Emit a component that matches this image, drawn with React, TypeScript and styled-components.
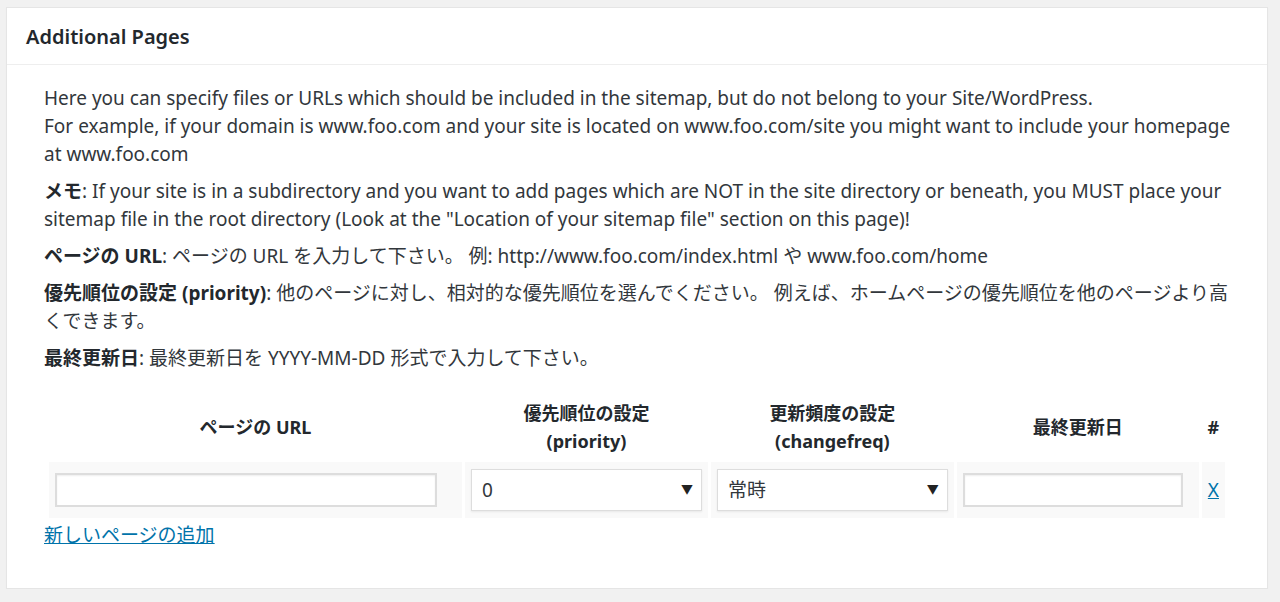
import React from "react";
import styled, { createGlobalStyle } from "styled-components";

const Global = createGlobalStyle`
  body { margin: 0; background: #f1f1f1; font-family: "Noto Sans", "Noto Sans CJK JP", sans-serif; color: #23282d; }
`;
const Page = styled.div`padding: 7px 12px 0 6px;`;
const Panel = styled.div`
  background: #fff; border: 1px solid #e5e5e5; box-shadow: 0 1px 1px rgba(0,0,0,.04);
  height: 582px; box-sizing: border-box;
`;
const Header = styled.h2`
  margin: 0; padding: 0 19px; height: 56px; display: flex; align-items: center;
  font-size: 20px; font-weight: 600; border-bottom: 1px solid #eee; color: #23282d;
`;
const Body = styled.div`padding: 19px 30px 0 37px; font-size: 19px; line-height: 28px; color: #32373c;`;
const P = styled.p`margin: 0 0 9px;`;
const B = styled.b`font-weight: 700; color: #23282d;`;
const Table = styled.table`border-spacing: 3px; margin-left: 2px; margin-top: 24px; width: 1182px;`;
const Th = styled.th<{ w: number }>`
  width: ${p => p.w}px; font-weight: 700; font-size: 18px; line-height: 28px; text-align: center;
  padding: 0 0 4px; color: #23282d;
`;
const Td = styled.td`background: #f9f9f9; height: 56px; padding: 0 6px; vertical-align: middle;`;
const Input = styled.input`
  width: 100%; box-sizing: border-box; height: 34px; border: 2px solid #ddd; background: #fff;
  box-shadow: inset 0 1px 2px rgba(0,0,0,.07);
`;
const Select = styled.div`
  height: 42px; box-sizing: border-box; border: 1px solid #ddd; background: #fff; display: flex;
  align-items: center; justify-content: space-between; padding: 0 8px 0 10px; font-size: 19px; color: #32373c;
  box-shadow: 0 1px 2px rgba(0,0,0,.07);
`;
const Arrow = styled.span`font-size: 12px; color: #222;`;
const Link = styled.a`color: #0073aa; text-decoration: underline; font-size: 19px;`;

export default function App() {
  return (
    <Page>
      <Global />
      <Panel>
        <Header>Additional Pages</Header>
        <Body>
          <P>Here you can specify files or URLs which should be included in the sitemap, but do not belong to your Site/WordPress.<br />
            For example, if your domain is www.foo.com and your site is located on www.foo.com/site you might want to include your homepage at www.foo.com</P>
          <P><B>メモ</B>: If your site is in a subdirectory and you want to add pages which are NOT in the site directory or beneath, you MUST place your sitemap file in the root directory (Look at the "Location of your sitemap file" section on this page)!</P>
          <P><B>ページの URL</B>: ページの URL を入力して下さい。 例: http://www.foo.com/index.html や www.foo.com/home</P>
          <P><B>優先順位の設定 (priority)</B>: 他のページに対し、相対的な優先順位を選んでください。 例えば、ホームページの優先順位を他のページより高くできます。</P>
          <P><B>最終更新日</B>: 最終更新日を YYYY-MM-DD 形式で入力して下さい。</P>
          <Table>
            <thead>
              <tr>
                <Th w={413}>ページの URL</Th>
                <Th w={243}>優先順位の設定<br />(priority)</Th>
                <Th w={243}>更新頻度の設定<br />(changefreq)</Th>
                <Th w={242}>最終更新日</Th>
                <Th w={21}>#</Th>
              </tr>
            </thead>
            <tbody>
              <tr>
                <Td><Input style={{ width: 382 }} /></Td>
                <Td><Select>0<Arrow>▼</Arrow></Select></Td>
                <Td><Select>常時<Arrow>▼</Arrow></Select></Td>
                <Td><Input style={{ width: 220 }} /></Td>
                <Td><Link href="#">X</Link></Td>
              </tr>
            </tbody>
          </Table>
          <Link href="#">新しいページの追加</Link>
        </Body>
      </Panel>
    </Page>
  );
}
